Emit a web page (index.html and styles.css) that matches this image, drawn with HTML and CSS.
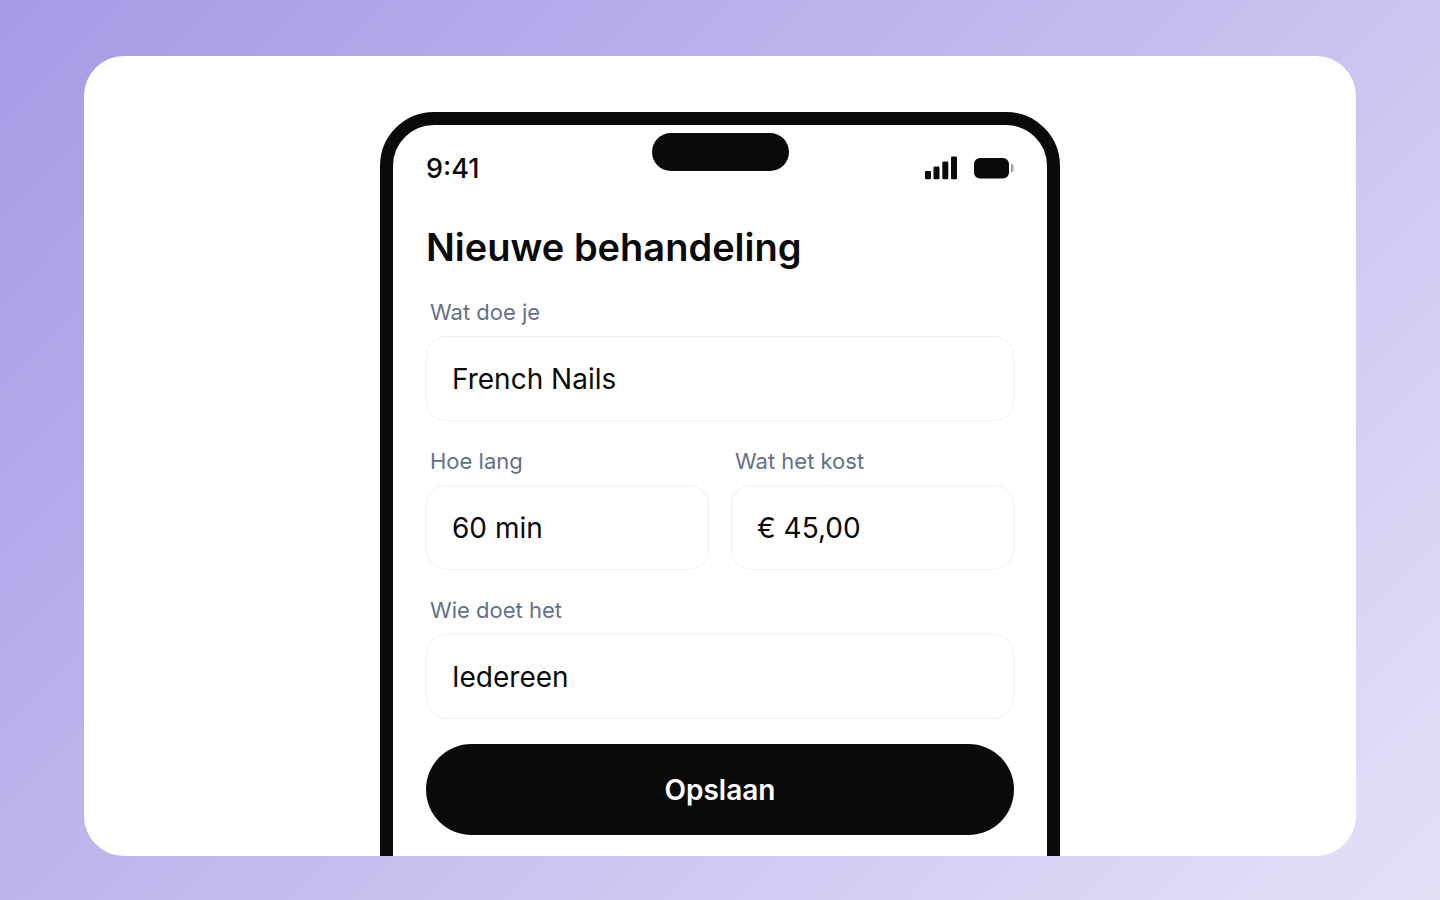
FILE: index.html
```html
<!DOCTYPE html>
<html lang="nl">
<head>
    <meta charset="UTF-8">
    <meta name="viewport" content="width=device-width, initial-scale=1.0">
    <title>Nieuwe behandeling</title>
    <link rel="stylesheet" href="styles.css">
</head>
<body>
    <main class="card">
        <div class="phone">
            <div class="island"></div>

            <div class="status-bar">
                <span class="time">9:41</span>
                <div class="status-icons">
                    <svg class="signal" width="34" height="24" viewBox="0 0 34 24" aria-hidden="true">
                        <rect x="1" y="15" width="6" height="8.200" rx="1.300"/>
                        <rect x="9.5" y="10.500" width="6" height="12.700" rx="1.300"/>
                        <rect x="18.300" y="5.500" width="6" height="17.700" rx="1.300"/>
                        <rect x="27" y="0.500" width="6" height="22.700" rx="1.300"/>
                    </svg>
                    <svg class="battery" width="40" height="22" viewBox="0 0 40 22" aria-hidden="true">
                        <rect x="0" y="1" width="35" height="20.500" rx="6"/>
                        <path class="battery-tip" d="M37 7h.8c1 0 1.700.8 1.700 1.800v4.400c0 1-.7 1.800-1.700 1.800H37z"/>
                    </svg>
                </div>
            </div>

            <form class="form">
                <h1>Nieuwe behandeling</h1>

                <div class="field">
                    <label for="treatment">Wat doe je</label>
                    <input type="text" id="treatment" value="French Nails">
                </div>

                <div class="field-row">
                    <div class="field">
                        <label for="duration">Hoe lang</label>
                        <input type="text" id="duration" value="60 min">
                    </div>
                    <div class="field">
                        <label for="price">Wat het kost</label>
                        <input type="text" id="price" value="€ 45,00">
                    </div>
                </div>

                <div class="field">
                    <label for="staff">Wie doet het</label>
                    <input type="text" id="staff" value="Iedereen">
                </div>

                <button type="button" class="save-btn">Opslaan</button>
            </form>
        </div>
    </main>
</body>
</html>
```
FILE: styles.css
```css
/* Reset & Variables */
* {
    margin: 0;
    padding: 0;
    box-sizing: border-box;
}

:root {
    --ink: #0a0a0a;
    --label: #64708a;
    --line: #f0f0f1;
    --white: #ffffff;
}

body {
    display: flex;
    height: 100vh;
    padding: 56px 84px 44px;
    font-family: Inter, "Liberation Sans", sans-serif;
    color: var(--ink);
    background: linear-gradient(135deg, #a69ae6 0%, #c5bcee 50%, #dfdaf7 90%, #e4e0f6 100%);
}

.card {
    flex: 1;
    display: flex;
    justify-content: center;
    align-items: flex-start;
    padding: 56px 24px 0;
    background: var(--white);
    border-radius: 40px;
    overflow: hidden;
}

/* Phone */
.phone {
    position: relative;
    width: 100%;
    max-width: 680px;
    padding: 24px 33px 80px;
    border: 13px solid var(--ink);
    border-radius: 54px;
}

.island {
    position: absolute;
    top: 8px;
    left: 0;
    right: 0;
    width: 137px;
    height: 38px;
    margin: 0 auto;
    background: var(--ink);
    border-radius: 20px;
}

.status-bar {
    display: flex;
    justify-content: space-between;
    align-items: center;
    height: 38px;
}

.time {
    font-size: 27px;
    font-weight: 500;
}

.status-icons {
    display: flex;
    align-items: center;
    gap: 16px;
}

.signal,
.battery {
    display: block;
    fill: var(--ink);
}

.battery-tip {
    fill: #a3a3a3;
}

/* Form */
.form {
    display: flex;
    flex-direction: column;
    gap: 25px;
    padding-top: 35px;
}

h1 {
    font-size: 38px;
    line-height: 50px;
    font-weight: 600;
}

.field {
    flex: 1;
    min-width: 0;
    display: flex;
    flex-direction: column;
    gap: 8px;
}

.field-row {
    display: flex;
    gap: 22px;
}

label {
    padding-left: 4px;
    font-size: 22px;
    line-height: 31px;
    color: var(--label);
}

input {
    width: 100%;
    height: 85px;
    padding: 0 25px;
    font: inherit;
    font-size: 28px;
    color: var(--ink);
    background: var(--white);
    border: 1px solid var(--line);
    border-radius: 20px;
}

.save-btn {
    height: 91px;
    font: inherit;
    font-size: 28px;
    font-weight: 600;
    color: var(--white);
    background: var(--ink);
    border: none;
    border-radius: 46px;
    cursor: pointer;
}
```
